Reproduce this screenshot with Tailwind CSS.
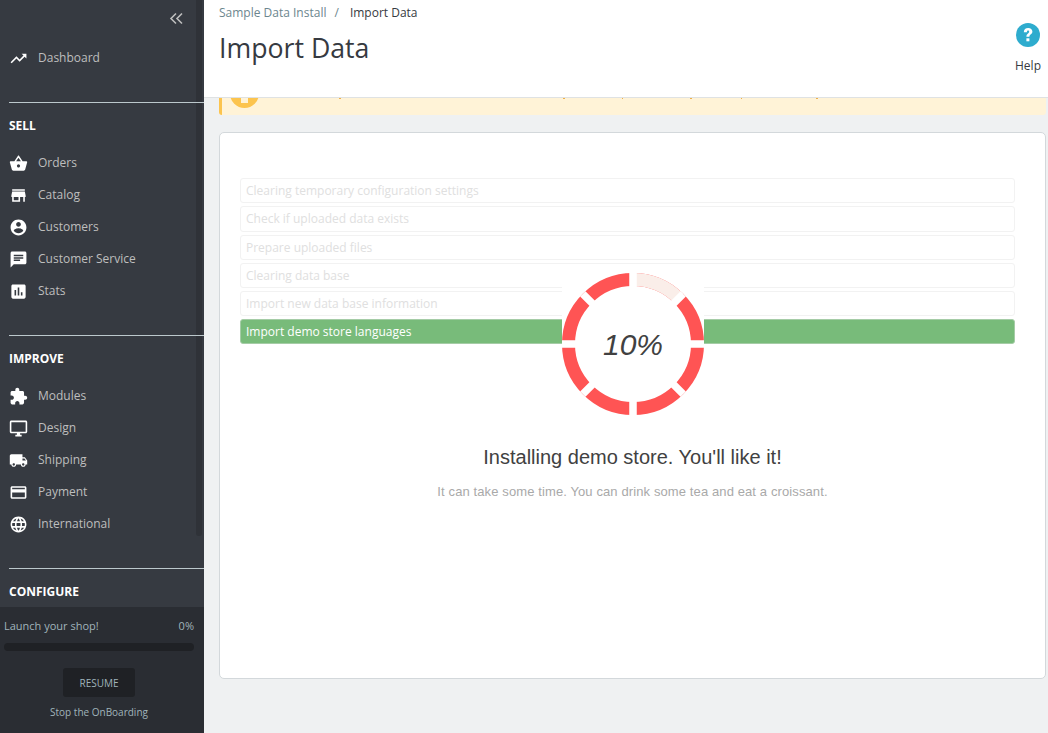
<!DOCTYPE html>
<html lang="en">
<head>
<meta charset="utf-8">
<title>Import Data</title>
<script src="https://cdn.jsdelivr.net/npm/@tailwindcss/browser@4"></script>
</head>
<body class="m-0 overflow-hidden">
<div class="flex w-[1048px] h-[733px] overflow-hidden font-['Open_Sans',sans-serif] bg-[#eff1f2]">
  <aside class="relative w-[204px] h-[733px] shrink-0 flex flex-col bg-[#363a41] text-[12px] text-[#bebebe]">
    <div class="absolute left-[196px] top-0 w-[6px] h-[536px] rounded-b-[3px] bg-[#2f3238]"></div>
    <div class="relative flex flex-col grow">
      <div class="h-[42px] flex justify-end pr-[20px] pt-[11px]">
        <svg class="w-[15px] h-[15px]" viewBox="0 0 15 15" fill="none" stroke="#bebebe" stroke-width="1.6"><path d="M7 2.5 2 7.5l5 5M13 2.5l-5 5 5 5"/></svg>
      </div>
      <a class="flex items-center h-[32px] pl-[9px] gap-[10px]"><svg class="w-[19px] h-[19px] fill-white" viewBox="0 0 24 24"><path d="M16 6l2.29 2.29-4.88 4.88-4-4L2 16.59 3.41 18l6-6 4 4 6.3-6.29L22 12V6z"/></svg>Dashboard</a>
      <div class="mt-[28px] ml-[9px] h-px bg-[#bcc8cc]"></div>
      <div class="h-[44px] pt-[2px] pl-[9px] flex items-center text-[12px] font-bold text-white">SELL</div>
      <a class="flex items-center h-[32px] pl-[9px] gap-[10px]"><svg class="w-[19px] h-[19px] fill-white" viewBox="0 0 24 24"><path d="M17.21 9l-4.38-6.56c-.19-.28-.51-.42-.83-.42-.32 0-.64.14-.83.43L6.79 9H2c-.55 0-1 .45-1 1 0 .09.01.18.04.27l2.54 9.27c.23.84 1 1.46 1.92 1.46h13c.92 0 1.69-.62 1.93-1.46l2.54-9.27L23 10c0-.55-.45-1-1-1h-4.79zM9 9l3-4.4L15 9H9zm3 8c-1.1 0-2-.9-2-2s.9-2 2-2 2 .9 2 2-.9 2-2 2z"/></svg>Orders</a>
      <a class="flex items-center h-[32px] pl-[9px] gap-[10px]"><svg class="w-[19px] h-[19px] fill-white" viewBox="0 0 24 24"><path d="M20 4H4v2h16V4zm1 10v-2l-1-5H4l-1 5v2h1v6h10v-6h4v6h2v-6h1zm-9 4H6v-4h6v4z"/></svg>Catalog</a>
      <a class="flex items-center h-[32px] pl-[9px] gap-[10px]"><svg class="w-[19px] h-[19px] fill-white" viewBox="0 0 24 24"><path d="M12 2C6.48 2 2 6.48 2 12s4.48 10 10 10 10-4.48 10-10S17.52 2 12 2zm0 3c1.66 0 3 1.34 3 3s-1.34 3-3 3-3-1.34-3-3 1.34-3 3-3zm0 14.2c-2.5 0-4.71-1.28-6-3.22.03-1.99 4-3.08 6-3.08 1.99 0 5.97 1.09 6 3.08-1.29 1.94-3.5 3.22-6 3.22z"/></svg>Customers</a>
      <a class="flex items-center h-[32px] pl-[9px] gap-[10px]"><svg class="w-[19px] h-[19px] fill-white" viewBox="0 0 24 24"><path d="M20 2H4c-1.1 0-1.99.9-1.99 2L2 22l4-4h14c1.1 0 2-.9 2-2V4c0-1.1-.9-2-2-2zM6 9h12v2H6V9zm8 5H6v-2h8v2zm4-6H6V6h12v2z"/></svg>Customer Service</a>
      <a class="flex items-center h-[32px] pl-[9px] gap-[10px]"><svg class="w-[19px] h-[19px] fill-white" viewBox="0 0 24 24"><path d="M19 3H5c-1.1 0-2 .9-2 2v14c0 1.1.9 2 2 2h14c1.1 0 2-.9 2-2V5c0-1.1-.9-2-2-2zM9 17H7v-7h2v7zm4 0h-2V7h2v10zm4 0h-2v-4h2v4z"/></svg>Stats</a>
      <div class="mt-[28px] ml-[9px] h-px bg-[#bcc8cc]"></div>
      <div class="h-[44px] pt-[2px] pl-[9px] flex items-center text-[12px] font-bold text-white">IMPROVE</div>
      <a class="flex items-center h-[32px] pl-[9px] gap-[10px]"><svg class="w-[19px] h-[19px] fill-white" viewBox="0 0 24 24"><path d="M20.5 11H19V7c0-1.1-.9-2-2-2h-4V3.5C13 2.12 11.88 1 10.5 1S8 2.12 8 3.5V5H4c-1.1 0-1.99.9-1.99 2v3.8H3.5c1.49 0 2.7 1.21 2.7 2.7s-1.21 2.7-2.7 2.7H2V20c0 1.1.9 2 2 2h3.8v-1.5c0-1.49 1.21-2.7 2.7-2.7 1.49 0 2.7 1.21 2.7 2.7V22H17c1.1 0 2-.9 2-2v-4h1.5c1.38 0 2.5-1.12 2.5-2.5S21.88 11 20.5 11z"/></svg>Modules</a>
      <a class="flex items-center h-[32px] pl-[9px] gap-[10px]"><svg class="w-[19px] h-[19px] fill-white" viewBox="0 0 24 24"><path d="M21 2H3c-1.1 0-2 .9-2 2v12c0 1.1.9 2 2 2h7v2H8v2h8v-2h-2v-2h7c1.1 0 2-.9 2-2V4c0-1.1-.9-2-2-2zm0 14H3V4h18v12z"/></svg>Design</a>
      <a class="flex items-center h-[32px] pl-[9px] gap-[10px]"><svg class="w-[19px] h-[19px] fill-white" viewBox="0 0 24 24"><path d="M20 8h-3V4H3c-1.1 0-2 .9-2 2v11h2c0 1.66 1.34 3 3 3s3-1.34 3-3h6c0 1.66 1.34 3 3 3s3-1.34 3-3h2v-5l-3-4zM6 18.5c-.83 0-1.5-.67-1.5-1.5s.67-1.5 1.5-1.5 1.5.67 1.5 1.5-.67 1.5-1.5 1.5zm13.5-9l1.96 2.5H17V9.5h2.5zm-1.5 9c-.83 0-1.5-.67-1.5-1.5s.67-1.5 1.5-1.5 1.5.67 1.5 1.5-.67 1.5-1.5 1.5z"/></svg>Shipping</a>
      <a class="flex items-center h-[32px] pl-[9px] gap-[10px]"><svg class="w-[19px] h-[19px] fill-white" viewBox="0 0 24 24"><path d="M20 4H4c-1.11 0-1.99.89-1.99 2L2 18c0 1.11.89 2 2 2h16c1.11 0 2-.89 2-2V6c0-1.11-.89-2-2-2zm0 14H4v-6h16v6zm0-10H4V6h16v2z"/></svg>Payment</a>
      <a class="flex items-center h-[32px] pl-[9px] gap-[10px]"><svg class="w-[19px] h-[19px] fill-white" viewBox="0 0 24 24"><path d="M11.99 2C6.47 2 2 6.48 2 12s4.47 10 9.99 10C17.52 22 22 17.52 22 12S17.52 2 11.99 2zm6.93 6h-2.95c-.32-1.25-.78-2.45-1.38-3.56 1.84.63 3.37 1.91 4.33 3.56zM12 4.04c.83 1.2 1.48 2.53 1.91 3.96h-3.82c.43-1.43 1.08-2.76 1.91-3.96zM4.26 14C4.1 13.36 4 12.69 4 12s.1-1.36.26-2h3.38c-.08.66-.14 1.32-.14 2 0 .68.06 1.34.14 2H4.26zm.82 2h2.95c.32 1.25.78 2.45 1.38 3.56-1.84-.63-3.37-1.9-4.33-3.56zm2.95-8H5.08c.96-1.66 2.49-2.93 4.33-3.56C8.81 5.55 8.35 6.75 8.03 8zM12 19.96c-.83-1.2-1.48-2.53-1.91-3.96h3.82c-.43 1.43-1.08 2.76-1.91 3.96zM14.34 14H9.66c-.09-.66-.16-1.32-.16-2 0-.68.07-1.35.16-2h4.68c.09.65.16 1.32.16 2 0 .68-.07 1.34-.16 2zm.25 5.56c.6-1.11 1.06-2.31 1.38-3.56h2.95c-.96 1.65-2.49 2.93-4.33 3.56zM16.36 14c.08-.66.14-1.32.14-2 0-.68-.06-1.34-.14-2h3.38c.16.64.26 1.31.26 2s-.1 1.36-.26 2h-3.38z"/></svg>International</a>
      <div class="mt-[28px] ml-[9px] h-px bg-[#bcc8cc]"></div>
      <div class="h-[44px] pt-[2px] pl-[9px] flex items-center text-[12px] font-bold text-white">CONFIGURE</div>
    </div>
    <div class="absolute left-0 bottom-0 w-[204px] h-[126px] px-[4px] flex flex-col bg-[#2a2d33] text-[#a0b4bb]">
      <div class="flex justify-between items-center h-[16px] mt-[11px] w-[190px] text-[11px]"><span>Launch your shop!</span><span>0%</span></div>
      <div class="mt-[9px] w-[190px] h-[8px] rounded-full bg-[#1f2125]"></div>
      <div class="mt-[17px] ml-[59px] w-[72px] h-[29px] pt-[1px] rounded-[3px] bg-[#1f2125] flex items-center justify-center text-[10px]">RESUME</div>
      <div class="mt-[8px] w-[190px] text-center text-[10px]">Stop the OnBoarding</div>
    </div>
  </aside>
  <main class="w-[844px] flex flex-col">
    <header class="relative h-[98px] shrink-0 bg-white border-b border-[#dfe2e3] text-[#363a41]">
      <div class="pl-[15px] pt-[5px] h-[19px] flex items-center text-[12px] leading-[17px]"><span class="text-[#6c868e]">Sample Data Install</span><span class="text-[#6c868e] ml-[8px] mr-[11px]">/</span><span>Import Data</span></div>
      <h1 class="pl-[15px] mt-[11px] text-[26.7px] leading-[36px] font-normal">Import Data</h1>
      <div class="absolute right-0 top-[23px] w-[40px] flex flex-col items-center">
        <svg class="w-[24px] h-[24px]" viewBox="0 0 24 24"><circle cx="12" cy="12" r="12" fill="#2eacce"/><path d="M7.8 9.2C7.8 6.6 9.6 5 12.2 5c2.5 0 4.2 1.5 4.2 3.6 0 2.8-3 2.8-3 5.2h-3c0-3.4 2.8-3.4 2.8-5.1 0-.7-.5-1.1-1.1-1.1-.8 0-1.2.6-1.2 1.6z" fill="#fff"/><rect x="10.4" y="15.3" width="3" height="3" fill="#fff"/></svg>
        <span class="mt-[10px] text-[12px] leading-[17px]">Help</span>
      </div>
    </header>
    <div class="relative h-[17px] ml-[15px] mr-[2px] overflow-hidden rounded-b-[3px] bg-[#fff3d7] border-l-[3px] border-[#fcc44e] shrink-0">
      <div class="absolute left-[8px] top-[-19px] w-[29px] h-[29px] rounded-full bg-[#fcc44e]"></div>
      <div class="absolute left-[19px] top-0 w-[7px] h-[5px] bg-[#fff3d7]"></div>
      <div class="absolute left-[117px] top-0 w-[2px] h-px bg-[#eeb04a]"></div>
      <div class="absolute left-[341px] top-0 w-[2px] h-px bg-[#eeb04a]"></div>
      <div class="absolute left-[400px] top-0 w-px h-px bg-[#eeb04a]"></div>
      <div class="absolute left-[468px] top-0 w-[2px] h-px bg-[#eeb04a]"></div>
      <div class="absolute left-[519px] top-0 w-px h-px bg-[#eeb04a]"></div>
      <div class="absolute left-[594px] top-0 w-[2px] h-px bg-[#eeb04a]"></div>
    </div>
    <section class="mt-[17px] ml-[15px] mr-[2px] h-[547px] rounded-[5px] border border-[#d3d8db] bg-white flex flex-col items-center font-['Liberation_Sans',sans-serif]">
      <div class="relative mt-[45px] ml-[20px] self-start w-[775px] h-[166px] flex flex-col justify-between font-['Open_Sans',sans-serif] text-[12px] text-[#e0e0e0]">
        <div class="h-[25px] px-[5px] flex items-center rounded-[3px] border border-[#f2f2f2]">Clearing temporary configuration settings</div>
        <div class="h-[26px] px-[5px] flex items-center rounded-[3px] border border-[#f2f2f2]">Check if uploaded data exists</div>
        <div class="h-[25px] px-[5px] flex items-center rounded-[3px] border border-[#f2f2f2]">Prepare uploaded files</div>
        <div class="h-[25px] px-[5px] flex items-center rounded-[3px] border border-[#f2f2f2]">Clearing data base</div>
        <div class="h-[25px] px-[5px] flex items-center rounded-[3px] border border-[#f2f2f2]">Import new data base information</div>
        <div class="h-[25px] px-[5px] flex items-center rounded-[3px] border border-[#a5cca6] bg-[#78bb7a] text-white">Import demo store languages</div>
        <div class="absolute left-[322px] top-[95px] w-[142px] h-[142px] bg-white flex items-center justify-center">
          <svg class="absolute inset-0" width="142" height="142" viewBox="0 0 142 142" fill="none">
            <circle cx="71" cy="71" r="64.5" stroke="#ff5454" stroke-width="13"/>
            <path d="M71 6.5A64.5 64.5 0 0 1 116.6 25.4" stroke="#faeee9" stroke-width="13"/>
            <path d="M71 0V142M0 71H142M20.8 20.8 121.2 121.2M121.2 20.8 20.8 121.2" stroke="#fff" stroke-width="7.5"/>
          </svg>
          <span class="relative mt-[1px] text-[30px] italic text-[#414141] font-['Liberation_Sans',sans-serif]">10%</span>
        </div>
      </div>
      <h2 class="mt-[99px] text-[20px] leading-[28px] font-normal text-[#414141]">Installing demo store. You'll like it!</h2>
      <p class="mt-[12px] text-[13px] leading-[17px] tracking-[0.11px] text-[#a9a9a9]">It can take some time. You can drink some tea and eat a croissant.</p>
    </section>
  </main>
</div>
</body>
</html>
